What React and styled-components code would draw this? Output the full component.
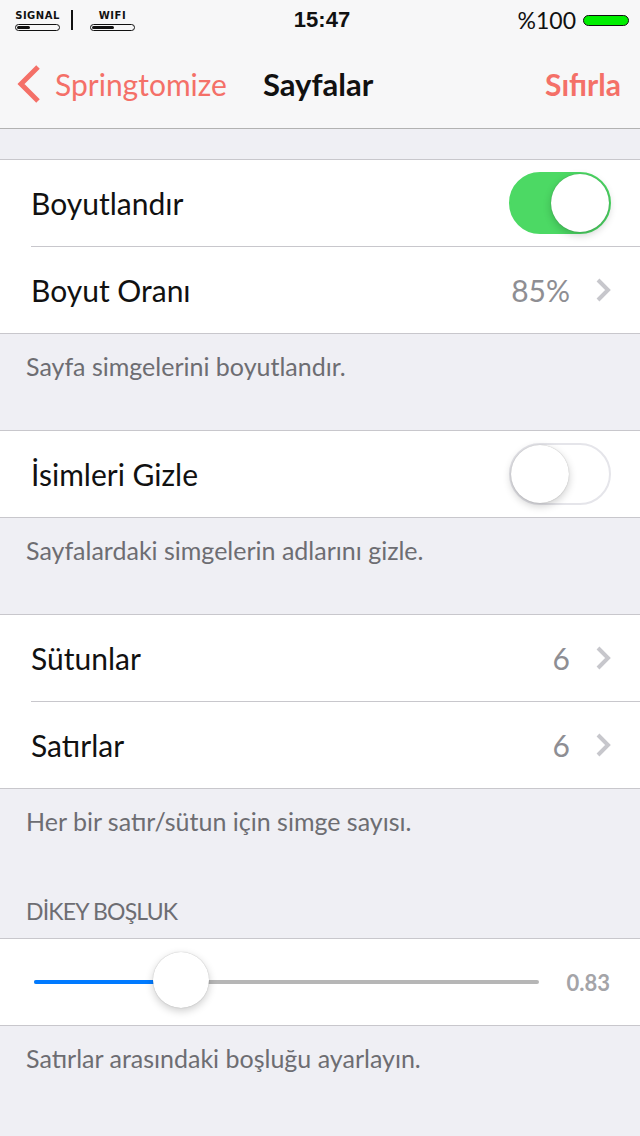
import React from 'react';
import styled, { createGlobalStyle } from 'styled-components';

const GlobalStyle = createGlobalStyle`
  body {
    margin: 0;
    background: #efeff4;
    font-family: Lato, "Noto Sans", sans-serif;
  }
`;

const Page = styled.div`
  width: 640px;
  min-height: 1136px;
  background: #efeff4;
  display: flex;
  flex-direction: column;
`;

const TopBar = styled.div`
  background: #f7f7f8;
  border-bottom: 1px solid #b2b2b2;
`;

const StatusBar = styled.div`
  height: 40px;
  display: grid;
  grid-template-columns: 1fr auto 1fr;
  align-items: center;
  padding: 0 11px 0 15px;
`;

const StatusLeft = styled.div`
  display: flex;
  align-items: center;
  gap: 11px;
`;

const StatusItem = styled.div`
  display: flex;
  flex-direction: column;
  align-items: center;
  gap: 3px;
  margin-left: ${p => p.$shift || 0}px;
  font-family: "DejaVu Sans", sans-serif;
  font-size: 10px;
  font-weight: bold;
  letter-spacing: 0.5px;
  color: #111;
`;

const Pill = styled.div`
  width: 43px;
  height: 5px;
  border: 1px solid #111;
  border-radius: 4px;
  position: relative;
  &::after {
    content: '';
    position: absolute;
    left: 1px;
    top: 1px;
    height: 3px;
    width: ${p => p.fill}px;
    background: #111;
    border-radius: 2px;
  }
`;

const Divider = styled.div`
  width: 2px;
  height: 20px;
  background: #111;
`;

const Time = styled.div`
  font-family: "Liberation Sans", sans-serif;
  font-weight: bold;
  font-size: 22px;
  color: #111;
`;

const StatusRight = styled.div`
  display: flex;
  justify-content: flex-end;
  align-items: center;
  gap: 7px;
  font-size: 23px;
  color: #111;
`;

const Battery = styled.div`
  width: 44px;
  height: 9px;
  border: 1px solid #111;
  border-radius: 6px;
  background: #00ee00;
`;

const NavBar = styled.div`
  height: 88px;
  display: flex;
  align-items: center;
  justify-content: space-between;
  padding: 0 19px 0 17px;
  position: relative;
`;

const BackButton = styled.div`
  display: flex;
  align-items: center;
  gap: 14px;
  color: #f47068;
  font-size: 30px;
`;

const Title = styled.div`
  position: absolute;
  left: 263px;
  font-size: 31px;
  font-weight: bold;
  color: #111;
`;

const NavAction = styled.div`
  font-size: 30px;
  font-weight: bold;
  color: #f47068;
`;

const Group = styled.div`
  background: #fff;
  border-top: 1px solid #c8c7cc;
  border-bottom: 1px solid #c8c7cc;
  margin-top: ${p => p.$top || 0}px;
`;

const Row = styled.div`
  height: 86px;
  display: flex;
  align-items: center;
  padding: 0 29px 0 31px;
  & + & {
    border-top: 1px solid #c8c7cc;
    margin-left: 31px;
    padding-left: 0;
  }
`;

const Label = styled.div`
  flex: 1;
  font-size: 30px;
  color: #111;
`;

const Value = styled.div`
  font-size: 30px;
  color: #8e8e93;
  margin-right: 25px;
`;

const Footer = styled.div`
  padding: 17px 26px 49px;
  font-size: 25px;
  line-height: 30px;
  color: #6d6d72;
`;

const Header = styled.div`
  padding: 11px 26px 12px;
  font-size: 23px;
  line-height: 30px;
  letter-spacing: -0.8px;
  color: #6d6d72;
`;

const Toggle = styled.div`
  width: 102px;
  height: 62px;
  box-sizing: border-box;
  border-radius: 31px;
  border: 2px solid ${p => (p.on ? '#4cd964' : '#e5e5ea')};
  background: ${p => (p.on ? '#4cd964' : '#fff')};
  display: flex;
  justify-content: ${p => (p.on ? 'flex-end' : 'flex-start')};
  align-items: center;
`;

const Knob = styled.div`
  width: 58px;
  height: 58px;
  border-radius: 50%;
  background: #fff;
  box-shadow: 0 3px 8px rgba(0, 0, 0, 0.2), 0 0 1px rgba(0, 0, 0, 0.3);
`;

const SliderRow = styled.div`
  height: 86px;
  display: flex;
  align-items: center;
  padding: 0 30px 0 34px;
  gap: 27px;
`;

const Track = styled.div`
  flex: 1;
  height: 4px;
  border-radius: 2px;
  background: #b6b6b6;
  position: relative;
`;

const TrackFill = styled.div`
  height: 100%;
  border-radius: 2px;
  background: #007aff;
`;

const Thumb = styled.div`
  position: absolute;
  top: -28px;
  width: 56px;
  height: 56px;
  margin-left: -28px;
  border-radius: 50%;
  background: #fff;
  box-shadow: 0 3px 8px rgba(0, 0, 0, 0.2), 0 0 1px rgba(0, 0, 0, 0.3);
`;

const SliderValue = styled.div`
  font-size: 22px;
  font-weight: bold;
  color: #a4a4a8;
`;

const Chevron = () => (
  <svg width="16" height="26" viewBox="0 0 16 26">
    <polyline points="3,3 13,13 3,23" fill="none" stroke="#c7c7cc" strokeWidth="4" />
  </svg>
);

const BackChevron = () => (
  <svg width="24" height="40" viewBox="0 0 24 40">
    <polyline points="21,3 4,20 21,37" fill="none" stroke="#f47068" strokeWidth="5" />
  </svg>
);

const sliderPct = 0.29;

export default function App() {
  return (
    <Page>
      <GlobalStyle />
      <TopBar>
        <StatusBar>
          <StatusLeft>
            <StatusItem>SIGNAL<Pill fill={13} /></StatusItem>
            <Divider />
            <StatusItem $shift={6}>WIFI<Pill fill={22} /></StatusItem>
          </StatusLeft>
          <Time>15:47</Time>
          <StatusRight>%100<Battery /></StatusRight>
        </StatusBar>
        <NavBar>
          <BackButton><BackChevron />Springtomize</BackButton>
          <Title>Sayfalar</Title>
          <NavAction>Sıfırla</NavAction>
        </NavBar>
      </TopBar>

      <Group $top={30}>
        <Row>
          <Label>Boyutlandır</Label>
          <Toggle on><Knob /></Toggle>
        </Row>
        <Row>
          <Label>Boyut Oranı</Label>
          <Value>85%</Value>
          <Chevron />
        </Row>
      </Group>
      <Footer>Sayfa simgelerini boyutlandır.</Footer>

      <Group>
        <Row>
          <Label>İsimleri Gizle</Label>
          <Toggle><Knob /></Toggle>
        </Row>
      </Group>
      <Footer>Sayfalardaki simgelerin adlarını gizle.</Footer>

      <Group>
        <Row>
          <Label>Sütunlar</Label>
          <Value>6</Value>
          <Chevron />
        </Row>
        <Row>
          <Label>Satırlar</Label>
          <Value>6</Value>
          <Chevron />
        </Row>
      </Group>
      <Footer>Her bir satır/sütun için simge sayısı.</Footer>

      <Header>DİKEY BOŞLUK</Header>
      <Group>
        <SliderRow>
          <Track>
            <TrackFill style={{ width: `${sliderPct * 100}%` }} />
            <Thumb style={{ left: `${sliderPct * 100}%` }} />
          </Track>
          <SliderValue>0.83</SliderValue>
        </SliderRow>
      </Group>
      <Footer>Satırlar arasındaki boşluğu ayarlayın.</Footer>
    </Page>
  );
}
